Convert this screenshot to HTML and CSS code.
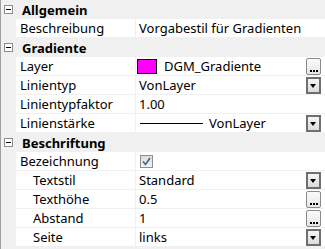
FILE: index.html
```html
<!DOCTYPE html>
<html>
<head>
<meta charset="utf-8">
<link rel="stylesheet" href="styles.css">
</head>
<body>
<div class="grid">
  <div class="cat"><span class="exp"></span><span class="cat-title">Allgemein</span></div>
  <div class="row"><div class="gut"></div><div class="lab">Beschreibung</div><div class="val">Vorgabestil für Gradienten</div></div>

  <div class="cat"><span class="exp"></span><span class="cat-title">Gradiente</span></div>
  <div class="row"><div class="gut"></div><div class="lab">Layer</div><div class="val"><span class="swatch"></span><span class="vt">DGM_Gradiente</span><span class="btn-e"><i></i><i></i><i></i></span></div></div>
  <div class="row"><div class="gut"></div><div class="lab">Linientyp</div><div class="val"><span class="vt">VonLayer</span><span class="btn-d"><span class="tri"></span></span></div></div>
  <div class="row"><div class="gut"></div><div class="lab">Linientypfaktor</div><div class="val">1.00</div></div>
  <div class="row"><div class="gut"></div><div class="lab">Linienstärke</div><div class="val"><span class="line"></span><span class="vt lw">VonLayer</span><span class="btn-d"><span class="tri"></span></span></div></div>

  <div class="cat"><span class="exp"></span><span class="cat-title">Beschriftung</span></div>
  <div class="row"><div class="gut"></div><div class="lab">Bezeichnung</div><div class="val"><span class="chk"><svg width="9" height="9" viewBox="0 0 9 9"><path d="M1 4.5 L3.5 7.5 L8 1" fill="none" stroke="#4a5f9a" stroke-width="1.6"/></svg></span></div></div>
  <div class="row"><div class="gut"></div><div class="lab sub">Textstil</div><div class="val"><span class="vt">Standard</span><span class="btn-d"><span class="tri"></span></span></div></div>
  <div class="row"><div class="gut"></div><div class="lab sub">Texthöhe</div><div class="val"><span class="vt">0.5</span><span class="btn-e"><i></i><i></i><i></i></span></div></div>
  <div class="row"><div class="gut"></div><div class="lab sub">Abstand</div><div class="val"><span class="vt">1</span><span class="btn-e"><i></i><i></i><i></i></span></div></div>
  <div class="row"><div class="gut"></div><div class="lab sub">Seite</div><div class="val"><span class="vt">links</span><span class="btn-d"><span class="tri"></span></span></div></div>
</div>
</body>
</html>
```
FILE: styles.css
```css
html, body { margin: 0; padding: 0; background: #ffffff; }
body {
  font-family: "Noto Sans", "DejaVu Sans", sans-serif;
  font-size: 13px;
  color: #000;
}
.grid {
  width: 325px;
  height: 249px;
  box-sizing: border-box;
  border-left: 1px solid #a0a0a0;
  background: #f0f0f0;
  display: flex;
  flex-direction: column;
  overflow: hidden;
}
.cat {
  height: 19px;
  flex: none;
  display: flex;
  align-items: center;
  background: #f0f0f0;
}
.exp {
  width: 7px;
  height: 7px;
  border: 1px solid #8c8c8c;
  background: #fff;
  margin-left: 3px;
  position: relative;
  flex: none;
}
.exp::after {
  content: "";
  position: absolute;
  left: 1px;
  top: 3px;
  width: 5px;
  height: 1px;
  background: #000;
}
.cat-title {
  font-weight: bold;
  margin-left: 9px;
}
.row {
  height: 19px;
  flex: none;
  display: grid;
  grid-template-columns: 15px 120px 1fr;
  box-sizing: border-box;
  border-bottom: 1px solid #f0f0f0;
}
.gut { background: #f0f0f0; }
.lab {
  background: #fff;
  border-right: 1px solid #f0f0f0;
  padding-left: 4px;
  display: flex;
  align-items: center;
  white-space: nowrap;
}
.lab.sub { padding-left: 17px; }
.val {
  background: #fff;
  padding-left: 3px;
  display: flex;
  align-items: center;
  white-space: nowrap;
  position: relative;
}
.swatch {
  width: 18px;
  height: 13px;
  border: 1px solid #000;
  background: #ff00ff;
  margin-left: -2px;
  margin-right: 7px;
  flex: none;
}
.line {
  width: 63px;
  height: 1px;
  background: #000;
  margin-left: 1px;
  margin-right: 6px;
  flex: none;
}
.btn-e, .btn-d {
  position: absolute;
  right: 4px;
  top: 1px;
  width: 15px;
  height: 17px;
  box-sizing: border-box;
}
.btn-e {
  border: 1px solid #8a8a8a;
  border-radius: 2px;
  background: linear-gradient(#fbfbfb, #e6e6e6);
  display: flex;
  align-items: flex-end;
  justify-content: center;
  gap: 1px;
  padding-bottom: 2px;
}
.btn-e i {
  display: block;
  width: 2px;
  height: 2px;
  background: #000;
}
.btn-d {
  border: 2px solid #6f6f6f;
  background: linear-gradient(#f6f6f6, #dcdcdc);
}
.tri {
  position: absolute;
  left: 2px;
  top: 5px;
  width: 0;
  height: 0;
  border-left: 3.5px solid transparent;
  border-right: 3.5px solid transparent;
  border-top: 4px solid #000;
}
.chk {
  width: 11px;
  height: 11px;
  border: 1px solid #8e8f8f;
  background: linear-gradient(#dcdcdc, #f4f4f4);
  display: flex;
  align-items: center;
  justify-content: center;
  margin-left: 1px;
}
```
